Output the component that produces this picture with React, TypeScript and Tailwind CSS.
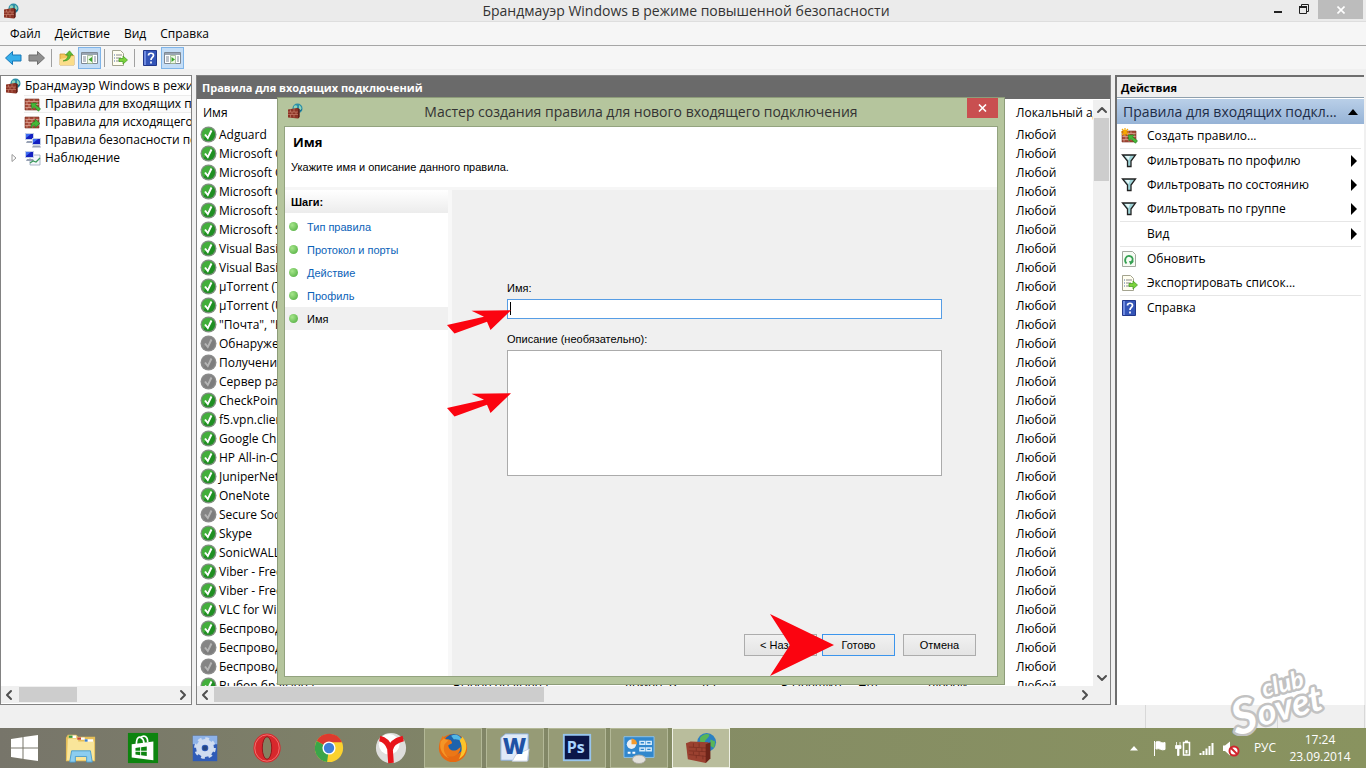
import type { ReactNode } from "react"
import { ChevronDown, ChevronLeft, ChevronRight, ChevronUp } from "lucide-react"

const ui = "font-['Open_Sans','Noto_Sans',sans-serif]"

interface Rule {
    name: string
    on: boolean
}

const rules: Rule[] = [
    { name: "Adguard", on: true },
    { name: "Microsoft O", on: true },
    { name: "Microsoft O", on: true },
    { name: "Microsoft O", on: true },
    { name: "Microsoft S", on: true },
    { name: "Microsoft S", on: true },
    { name: "Visual Basic", on: true },
    { name: "Visual Basic", on: true },
    { name: "µTorrent (T", on: true },
    { name: "µTorrent (U", on: true },
    { name: "\"Почта\", \"К", on: true },
    { name: "Обнаруже", on: false },
    { name: "Получение", on: false },
    { name: "Сервер раз", on: false },
    { name: "CheckPoint", on: true },
    { name: "f5.vpn.clien", on: true },
    { name: "Google Chr", on: true },
    { name: "HP All-in-O", on: true },
    { name: "JuniperNet", on: true },
    { name: "OneNote", on: true },
    { name: "Secure Soc", on: false },
    { name: "Skype", on: true },
    { name: "SonicWALL", on: true },
    { name: "Viber - Free", on: true },
    { name: "Viber - Free", on: true },
    { name: "VLC for Win", on: true },
    { name: "Беспровод", on: true },
    { name: "Беспровод", on: false },
    { name: "Беспровод", on: false },
    { name: "Выбор браузера", on: true },
]

const lastRow = ["Выбор браузера", "Домен, Ч", "Да", "Разрешить", "Нет", "Любой"]

const steps = ["Тип правила", "Протокол и порты", "Действие", "Профиль", "Имя"]

function FirewallIcon({ size = 16 }: { size?: number }) {
    return (
        <svg width={size} height={size} viewBox="0 0 16 16" className="shrink-0">
            <circle cx="10.5" cy="5.5" r="5" fill="#2c8fa8" />
            <path d="M7 3c2-2 4 0 3 1.500S7.500 6 6.500 7M12 2c2 1 3 3 2 5l-2-1z" fill="#8fd3b8" />
            <path d="M12 8.500c1.500-.5 2-1 2.500-2" stroke="#145c80" fill="none" />
            <path d="M1 6.500l9-1.500 2.500 1v8L11 15.500l-10-1z" fill="#8c3426" />
            <path d="M1 9h10M1 11.500h10M3.500 6.500V9M7 6v3M5 9v2.500M9 9v2.500M3.500 11.500v3M7 11.500v3" stroke="#d08a76" strokeWidth=".6" />
            <path d="M10 5l2.500 1v8L11 15.500V6.500z" fill="#5f2018" />
        </svg>
    )
}

function BrickIcon({ out = false, star = false }: { out?: boolean; star?: boolean }) {
    return (
        <svg width="17" height="16" viewBox="0 0 17 16" className="shrink-0">
            <path d="M1 3h14v11H1z" fill="#a64a38" />
            <path d="M1 5.500h14M1 8.500h14M1 11.500h14M5 3v2.500M10 3v2.500M3 5.500v3M8 5.500v3M13 5.500v3M5 8.500v3M10 8.500v3M3 11.500V14M8 11.500V14" stroke="#dba293" strokeWidth=".8" />
            <path d="M1 3h14v11H1z" fill="none" stroke="#7a2f22" strokeWidth=".6" />
            {out ? (
                <path d="M7 14c0-4 1-6 4-6.500V5l5 4.500-5 4v-2.500C9.500 11 8 12 7 14z" fill="#46b838" stroke="#1f7a1c" strokeWidth=".6" />
            ) : (
                <path d="M7 7h6.500l-2 1.800 5 4-2 2.500-4.500-4.500L8 13z" fill="#46b838" stroke="#1f7a1c" strokeWidth=".6" />
            )}
            {star && <path d="M4 0v8M0 4h8M1 1l6 6M7 1L1 7" stroke="#f6a800" strokeWidth="1.200" />}
        </svg>
    )
}

function ComputersIcon({ chart = false }: { chart?: boolean }) {
    return (
        <svg width="17" height="16" viewBox="0 0 17 16" className="shrink-0">
            {chart && <path d="M6 5h10v10H6z" fill="#f4f6fa" stroke="#97a5bb" strokeWidth=".8" />}
            <path d="M1 1h9v7H1z" fill="#c3cfe8" />
            <path d="M2 2h7v5H2z" fill="#1420c0" />
            <path d="M2 2h5L2 6z" fill="#3f6df0" />
            <path d="M3 9h6l1 2H2z" fill="#98a2b5" />
            {chart ? (
                <path d="M6 13l3-2 3 1 4-4" stroke="#3a9a5a" fill="none" strokeWidth="1.200" />
            ) : (
                <>
                    <path d="M8 6h9v7H8z" fill="#c3cfe8" />
                    <path d="M9 7h7v5H9z" fill="#1420c0" />
                    <path d="M9 7h5l-5 4z" fill="#3f6df0" />
                    <path d="M9 13.500h7l1 2H8z" fill="#98a2b5" />
                </>
            )}
        </svg>
    )
}

function StatusIcon({ on }: { on: boolean }) {
    return (
        <svg width="17" height="17" viewBox="0 0 17 17" className="shrink-0">
            <circle cx="8.500" cy="8.500" r="8" fill={on ? "#7f917f" : "#8c8c8c"} />
            <circle cx="8.500" cy="8.500" r="6.600" fill={on ? "#1f8f22" : "#7d7d7d"} />
            <path d="M8.500 1.900a6.600 6.600 0 0 0-5 11L13 3.800a6.600 6.600 0 0 0-4.500-1.900z" fill={on ? "#5cc44f" : "#8a8a8a"} opacity=".6" />
            <path d="M5 8.500l2.800 3.500L11.500 4.500" fill="none" stroke={on ? "#fff" : "#b5b5b5"} strokeWidth="2" />
        </svg>
    )
}

function HelpIcon() {
    return (
        <svg width="16" height="16" viewBox="0 0 16 16" className="shrink-0">
            <path d="M1.500.5h13v15h-13z" fill="#3455b8" stroke="#22378a" />
            <path d="M2 1h2v14H2z" fill="#6f8be0" />
            <path d="M6.500 5.500c0-3 5-3 5 0 0 2-2.500 2-2.500 4.500M9 11.500v2" stroke="#fff" strokeWidth="1.700" fill="none" />
        </svg>
    )
}

function ExportIcon() {
    return (
        <svg width="17" height="16" viewBox="0 0 17 16" className="shrink-0">
            <path d="M1.500.5h8l3 3v12h-11z" fill="#fffef0" stroke="#a3a38f" />
            <path d="M3 5h1M3 8h1M3 11h1" stroke="#4a6ab0" strokeWidth="1.200" />
            <path d="M5 5h6M5 8h5M5 11h4" stroke="#8a8a8a" />
            <path d="M8 8.500h4V6l4.500 4-4.500 4v-2.500H8z" fill="#7bd23c" stroke="#3f9a1c" strokeWidth=".7" />
        </svg>
    )
}

function RefreshIcon() {
    return (
        <svg width="16" height="16" viewBox="0 0 16 16" className="shrink-0">
            <path d="M1.500.5h10l3 3v12h-13z" fill="#f7fbf4" stroke="#a3a99f" />
            <path d="M5.500 12.500C2.500 9 5 4.500 8.500 5c3.500.3 4 4 2 6" stroke="#35a052" strokeWidth="1.800" fill="none" />
            <path d="M8 10l5 .5-3.500 3.500z" fill="#35a052" />
        </svg>
    )
}

function FilterIcon() {
    return (
        <svg width="16" height="16" viewBox="0 0 16 16" className="shrink-0">
            <path d="M1.500 2h13L10 8v5.500H6.500V8z" fill="#9fd4d8" stroke="#222" strokeWidth="1.300" />
            <path d="M4 3h5L7.500 7z" fill="#e6f8f8" />
        </svg>
    )
}

function ArrowIcon({ color, stroke, back = false }: { color: string; stroke: string; back?: boolean }) {
    return (
        <svg width="17" height="16" viewBox="0 0 17 16">
            <path
                d={back ? "M.5 8L7.500 1.500V5h8.500v6H7.500v3.500z" : "M16.500 8L9.500 1.500V5H1v6h8.500v3.500z"}
                fill={color}
                stroke={stroke}
            />
        </svg>
    )
}

function PaneIcon({ right = false }: { right?: boolean }) {
    return (
        <svg width="17" height="15" viewBox="0 0 17 15">
            <path d="M.5 2.500h16v11H.5z" fill="#fff" stroke="#7e8894" />
            <path d="M1 3h15v2H1z" fill="#9aa5b2" />
            <path d="M2 7h3M2 9h3M2 11h3M13 7h2M13 9h2M13 11h2" stroke="#7c8696" />
            <path d="M6.500 5.500h5v8h-5z" fill="#eef8e6" stroke="#8fa982" strokeWidth=".7" />
            <path d={right ? "M7.500 7l3.500 2.500L7.500 12z" : "M11 7L7.500 9.500 11 12z"} fill="#3aa62a" />
        </svg>
    )
}

function FolderUpIcon() {
    return (
        <svg width="16" height="16" viewBox="0 0 16 16">
            <path d="M1 4h5l1 1.500h8V15H1z" fill="#f5c65b" stroke="#c99a35" strokeWidth=".8" />
            <path d="M1 9l14-3v9H1z" fill="#fbdd8a" />
            <path d="M4 11c3-1 5-3 5-6H6.500L10.500.8 14 5h-2.500c0 4-3 6-7.500 6z" fill="#5fbd33" stroke="#3c8f1e" strokeWidth=".6" />
        </svg>
    )
}

function ToolButton({ label, active = false, children }: { label: string; active?: boolean; children: ReactNode }) {
    return (
        <button
            aria-label={label}
            className={`flex h-[22px] w-[23px] items-center justify-center border ${active ? "border-[#7fb4e8] bg-[#c4ddf6]" : "border-transparent"}`}
        >
            {children}
        </button>
    )
}

function HorizontalScroll({ thumb }: { thumb: string }) {
    return (
        <div className="mb-px flex h-[17px] shrink-0 items-center bg-[#f0f0f0] text-[#4f4f4f]">
            <ChevronLeft size={16} strokeWidth={3} className="shrink-0" />
            <div className={`h-[15px] bg-[#cdcdcd] ${thumb}`} />
            <ChevronRight size={16} strokeWidth={3} className="ml-auto shrink-0" />
        </div>
    )
}

function TreeRow({ icon, children, selected = false, arrow = false }: { icon: ReactNode; children: ReactNode; selected?: boolean; arrow?: boolean }) {
    return (
        <li className="flex h-[18px] items-center pl-[9px]">
            <span className="flex w-[14px] shrink-0 items-center">
                {arrow && (
                    <svg width="8" height="10" viewBox="0 0 8 10">
                        <path d="M2 1.500l4 3.500-4 3.500z" fill="#fff" stroke="#999" />
                    </svg>
                )}
            </span>
            <span className={`flex h-[18px] flex-1 items-center gap-1 whitespace-nowrap border-y ${selected ? "border-[#ececec] bg-[#fbfbfb]" : "border-transparent"}`}>
                {icon}
                {children}
            </span>
        </li>
    )
}

function ActionRow({ icon, children, menu = false, divider = false }: { icon?: ReactNode; children: ReactNode; menu?: boolean; divider?: boolean }) {
    return (
        <li className={divider ? "border-b border-[#e6e6e6]" : ""}>
            <button className="flex h-6 w-full items-center pl-px pr-1 text-left">
                <span className="flex w-[26px] shrink-0">{icon}</span>
                <span className="flex-1">{children}</span>
                {menu && (
                    <svg width="6" height="12" viewBox="0 0 6 12">
                        <path d="M0 0l6 6-6 6z" fill="#000" />
                    </svg>
                )}
            </button>
        </li>
    )
}

function RedArrow() {
    return (
        <svg width="64" height="24" viewBox="0 0 64 24">
            <path d="M0 15L37 6.700 24.500.8 64 .3 43.500 20 40 11.700 7.500 23.500z" fill="#fb0410" />
        </svg>
    )
}

function DialogButton({ children, primary = false }: { children: ReactNode; primary?: boolean }) {
    return (
        <button
            className={`h-[22px] w-[73px] whitespace-nowrap border bg-gradient-to-b from-[#f1f1f1] to-[#e4e4e4] ${primary ? "border-[#3c95ec]" : "border-[#acacac]"}`}
        >
            {children}
        </button>
    )
}

function WizardDialog() {
    return (
        <section className="absolute left-[277px] top-[97px] flex h-[588px] w-[728px] flex-col border border-[#8d9c79] bg-[#b5c59d] px-[6px] pb-[7px]">
            <header className="flex h-[28px] shrink-0 items-start">
                <span className="ml-[3px] mt-[5px]">
                    <FirewallIcon />
                </span>
                <h2 className="flex-1 whitespace-nowrap pl-3 pt-1 text-center text-[14px] leading-5 text-[#333]">
                    Мастер создания правила для нового входящего подключения
                </h2>
                <button aria-label="Закрыть" className="flex h-5 w-[31px] items-center justify-center bg-[#c94f50]">
                    <svg width="9" height="8" viewBox="0 0 9 8">
                        <path d="M1 .5l7 7M8 .5l-7 7" stroke="#fff" strokeWidth="1.600" />
                    </svg>
                </button>
            </header>

            <div className="flex flex-1 flex-col border border-[#93a37f] bg-white font-['Liberation_Sans',Arial,sans-serif] text-[11px] text-black">
                <div className="h-[60px] shrink-0 px-[6px] pt-[7px]">
                    <h3 className={`${ui} pl-[2px] text-[13px] font-bold leading-4`}>Имя</h3>
                    <p className="mt-[9px] leading-4">Укажите имя и описание данного правила.</p>
                </div>
                <div className="flex flex-1 border-t-[3px] border-[#f6f6f6]">
                    <nav className="w-[167px] shrink-0 border-r-4 border-[#f8f8f8] bg-white">
                        <h4 className="mb-[2px] flex h-[23px] items-center bg-gradient-to-b from-white to-[#ececec] pl-[6px] font-bold">Шаги:</h4>
                        <ul>
                            {steps.map((step, i) => (
                                <li key={step} className={`flex h-[23px] items-center gap-[9px] pl-1 ${i === 4 ? "bg-[#f0f0f0]" : ""}`}>
                                    <span className="size-[9px] rounded-full bg-radial-[at_35%_35%] from-[#a6e68b] to-[#4aa83a]" />
                                    {i === 4 ? step : <a href="#step" className="text-[#0b62b8]">{step}</a>}
                                </li>
                            ))}
                        </ul>
                    </nav>

                    <form className="flex flex-1 flex-col bg-[#f0f0f0] pb-[20px] pl-[55px] pr-[21px] pt-[90px]" onSubmit={(e) => e.preventDefault()}>
                        <label htmlFor="rule-name" className="leading-4">Имя:</label>
                        <div className="relative mr-[34px] mt-[3px]">
                            <input id="rule-name" type="text" className="block h-5 w-full border border-[#569de5] bg-white px-1 outline-none" />
                            <span className="absolute left-[3px] top-[3px] h-[13px] w-px bg-black" />
                            <span className="absolute -left-[60px] top-[11px]">
                                <RedArrow />
                            </span>
                        </div>
                        <label htmlFor="rule-note" className="mt-3 leading-4">Описание (необязательно):</label>
                        <div className="relative mr-[34px] mt-[3px]">
                            <textarea id="rule-note" className="block h-[126px] w-full resize-none border border-[#ababab] bg-white p-1 outline-none" />
                            <span className="absolute -left-[60px] top-[43px]">
                                <RedArrow />
                            </span>
                        </div>
                        <div className="relative mt-auto flex justify-end">
                            <DialogButton>&lt; Назад</DialogButton>
                            <span className="ml-[5px] mr-2 flex">
                                <DialogButton primary>Готово</DialogButton>
                            </span>
                            <DialogButton>Отмена</DialogButton>
                            <svg width="64" height="62" viewBox="0 0 64 62" className="absolute -top-5 right-[142px]">
                                <path d="M0 0l64 31L0 62l20-31z" fill="#fb0410" />
                            </svg>
                        </div>
                    </form>
                </div>
            </div>
        </section>
    )
}

function RulesTable() {
    return (
        <table className="w-full table-fixed border-collapse text-left">
            <colgroup>
                <col className="w-[250px]" />
                <col className="w-[171px]" />
                <col className="w-[77px]" />
                <col className="w-[80px]" />
                <col className="w-[77px]" />
                <col className="w-[69px]" />
                <col className="w-[89px]" />
                <col />
            </colgroup>
            <thead>
                <tr className="h-[25px]">
                    <th className="p-0 pl-[6px] font-normal">Имя</th>
                    <td colSpan={6} />
                    <th className="overflow-hidden whitespace-nowrap p-0 pl-[6px] font-normal">Локальный ад</th>
                </tr>
            </thead>
            <tbody>
                {rules.map((rule, i) => (
                    <tr key={i} className="h-[19px] whitespace-nowrap">
                        <td className="p-0 pl-[3px]">
                            <div className="flex h-[19px] items-center gap-[2px]">
                                <StatusIcon on={rule.on} />
                                {rule.name}
                            </div>
                        </td>
                        {i === rules.length - 1
                            ? lastRow.map((cell) => <td key={cell} className="p-0 pl-[6px]">{cell}</td>)
                            : <td colSpan={6} />}
                        <td className="p-0 pl-[6px]">Любой</td>
                    </tr>
                ))}
            </tbody>
        </table>
    )
}

function TaskItem({ label, open = false, active = false, children }: { label: string; open?: boolean; active?: boolean; children: ReactNode }) {
    const frame = active
        ? "border-[#eef0e4] bg-[#b9bd9c]"
        : open
            ? "border-[#b3b897] bg-[#969b76]"
            : "border-transparent"
    return (
        <button aria-label={label} className={`mx-[2px] flex h-10 w-[58px] items-center justify-center border ${frame}`}>
            <svg width="32" height="32" viewBox="0 0 34 34">{children}</svg>
        </button>
    )
}

function Taskbar() {
    return (
        <footer className="flex h-10 shrink-0 items-center bg-gradient-to-r from-[#77756a] via-[#858c65] to-[#89935f] text-white">
            <button aria-label="Пуск" className="flex w-[50px] justify-center">
                <svg width="28" height="26" viewBox="0 0 28 26">
                    <path d="M0 4l11.500-1.700V12.500H0zM12.500 2.100L27 0v12.500H12.500zM0 13.500h11.500v10.200L0 22zM12.500 13.500H27V26l-14.500-2.100z" fill="#fff" />
                </svg>
            </button>
            <TaskItem label="Проводник">
                <path d="M1 6l2-3h9l2 2h18v26H1z" fill="#e6bf58" />
                <path d="M3 7h11v3h17v20H2z" fill="#f9e59a" />
                <path d="M4 5h8M13 7h8M21 9h9" stroke="#fff" strokeWidth="2.500" />
                <path d="M4 5h4" stroke="#3c9a3c" strokeWidth="2.500" />
                <path d="M13 7h4" stroke="#c94a2e" strokeWidth="2.500" />
                <path d="M21 9h3" stroke="#3a7dc9" strokeWidth="2.500" />
                <path d="M7 20h20l2 12h-6v-6H11v6H5z" fill="#8ccdf0" stroke="#4c9ccc" />
            </TaskItem>
            <TaskItem label="Магазин">
                <path d="M1 1h32v32H1z" fill="#0d840f" />
                <path d="M5 13l23-3v20L5 27z" fill="#fff" />
                <path d="M10 13c0-8 3-8 5-7s3 2 3 6M14 6c4-3 8-2 8 5" stroke="#fff" strokeWidth="1.800" fill="none" />
                <path d="M9 17l5-.7V20H9zM15 16.200l6-.7V20h-6zM9 21h5v3.700L9 24zM15 21h6v4.500l-6-.7z" fill="#0d840f" />
            </TaskItem>
            <TaskItem label="Параметры">
                <path d="M4 4h26v27H4z" fill="#2f5cb8" />
                <path d="M4 4h26v9H4z" fill="#8db2e8" />
                <circle cx="17" cy="17" r="6.500" fill="none" stroke="#cfdcf0" strokeWidth="6" />
                <circle cx="17" cy="17" r="10" fill="none" stroke="#cfdcf0" strokeWidth="3" strokeDasharray="4 3.850" />
                <circle cx="17" cy="17" r="2.500" fill="#26457f" />
            </TaskItem>
            <TaskItem label="Opera">
                <ellipse cx="17" cy="17" rx="14.500" ry="15.500" fill="#d8282c" />
                <ellipse cx="17" cy="17" rx="13" ry="14" fill="none" stroke="#f07572" />
                <ellipse cx="17" cy="17" rx="5" ry="12" fill="#858061" stroke="#951217" />
            </TaskItem>
            <TaskItem label="Chrome">
                <circle cx="17" cy="17" r="15" fill="#fbd22f" />
                <path d="M17 17L4 9.500A15 15 0 0 1 30.800 11H17z" fill="#dd3a2e" />
                <path d="M17 17L4 9.500A15 15 0 0 0 15 32z" fill="#3aa54a" />
                <circle cx="17" cy="17" r="7" fill="#fff" />
                <circle cx="17" cy="17" r="5.500" fill="#3f7fd8" />
            </TaskItem>
            <TaskItem label="Яндекс">
                <circle cx="17" cy="17" r="16" fill="#dededc" />
                <circle cx="15" cy="13" r="11" fill="#fff" />
                <path d="M5 7c5 1 9 5 11 11M30 7c-8 2-13 6-14 12l1 14" stroke="#e8151b" strokeWidth="6" fill="none" />
            </TaskItem>
            <TaskItem label="Firefox" open>
                <circle cx="17" cy="17" r="15" fill="#e66a12" />
                <circle cx="18" cy="13" r="11" fill="#1d63ac" />
                <path d="M15 4c5-3 11 0 11 5-3 0-5-2-8-1z" fill="#52b7e4" />
                <path d="M27 5c7 8 5 19-4 24 3-5 5-13 1-20z" fill="#fcc42a" />
                <path d="M3 10l3-6 3 4c5-1 7 2 7 4l-4 2c0 4 4 7 9 5l4-3c0 7-6 11-12 10C6 25 2 18 3 10z" fill="#ec7716" />
                <path d="M4 10l3-3 5 2-4 4c-2 6 0 11 5 15C6 25 2 18 4 10z" fill="#f49527" />
            </TaskItem>
            <TaskItem label="Word" open>
                <path d="M2 6l5-4h24v28H2z" fill="#dfe9f8" stroke="#8fb0de" />
                <path d="M18 24l14-6-2 13H14z" fill="#fff" stroke="#c3cedf" />
                <text x="4" y="23" fontSize="24" fontWeight="800" fill="#1f52a5" fontFamily="Open Sans, sans-serif">W</text>
            </TaskItem>
            <TaskItem label="Photoshop" open>
                <path d="M2 2h30v29H2z" fill="#98c5ee" />
                <path d="M4 4h26v25H4z" fill="#0b1648" />
                <text x="6" y="22" fontSize="17" fontWeight="700" fill="#a8d4ff" fontFamily="Open Sans, sans-serif">Ps</text>
            </TaskItem>
            <TaskItem label="Панель управления" open>
                <path d="M1 5h32v22H1z" fill="#3187cd" stroke="#8ec3ec" />
                <circle cx="9" cy="13" r="5" fill="#e8eef4" />
                <path d="M9 13V7a6 6 0 0 1 6 6z" fill="#f49a2e" />
                <path d="M18 10h5v3h-5zM25 10h5v3h-5zM18 17h5v3h-5zM25 17h5v3h-5z" fill="none" stroke="#d5ebfb" strokeWidth="1.500" />
                <path d="M5 22h3M10 22h3" stroke="#fff" strokeWidth="2" />
                <ellipse cx="17" cy="29" rx="7" ry="4.500" fill="#e2e0db" stroke="#a9a79f" />
            </TaskItem>
            <TaskItem label="Брандмауэр" open active>
                <circle cx="23" cy="11" r="10" fill="#2a80c2" />
                <path d="M16 6c3-4 8-5 10-3-1 4-4 4-5 8l-5 1zM27 8l5 2-1 7-4-2z" fill="#58b657" />
                <path d="M1 12l5-2 19 1 1 18-4 4-19-4z" fill="#9b4130" />
                <path d="M4 16l19 1M4 20l19 1M4 24l19 2M9 12v4M15 12v4M12 17v3M18 17v4M9 21v3M15 21v4M12 25v3M19 25v4" stroke="#7a2d20" strokeWidth=".8" />
                <path d="M22 13l5-2v17l-5 5z" fill="#6d2419" />
            </TaskItem>

            <div className="ml-auto flex items-center">
                <svg width="118" height="18" viewBox="0 0 118 18" className="mr-[9px]">
                    <path d="M9 7l4 4.500H5z" fill="#fff" />
                    <path d="M29.500 2v15M31 3c4-2 5 2 9 .5v7c-4 1.500-5-2-9-.5z" stroke="#fff" fill="#fff" />
                    <path d="M58.500 3.500h6V16h-6z" fill="none" stroke="#fff" strokeWidth="1.500" />
                    <path d="M60 1.500h3v2h-3zM60.500 11h2v3.500h-2z" fill="#fff" />
                    <path d="M51.500 3v3.500M55 3v3.500M50.500 6.500h5.500v3h-2v7h-1.500v-7h-2z" stroke="#fff" fill="#fff" strokeWidth=".8" />
                    <path d="M75.500 14v2M78.500 12v4M81.500 9.500V16M84.500 7v9M87.500 4v12" stroke="#fff" strokeWidth="2" />
                    <path d="M98 6.500h2l5-4v14l-5-4.500h-2z" fill="#fff" />
                    <circle cx="109" cy="12" r="4.500" fill="#fff" stroke="#d0242b" strokeWidth="2" />
                    <path d="M106 9l6 6" stroke="#d0242b" strokeWidth="2" />
                </svg>
                <span className="w-[26px] text-center">РУС</span>
                <div className="w-[88px] whitespace-nowrap pr-1 text-center leading-[17px]">
                    <div>17:24</div>
                    <div>23.09.2014</div>
                </div>
            </div>
        </footer>
    )
}

export default function App() {
    return (
        <div className={`${ui} relative flex h-screen flex-col overflow-hidden bg-[#f0f0f0] text-[12px] leading-4 text-black`}>
            <header className="flex h-[22px] shrink-0 items-start border-b border-[#dedede] bg-[#ebebeb]">
                <span className="ml-[3px] mt-[3px] w-[104px]">
                    <FirewallIcon />
                </span>
                <h1 className="flex-1 pt-px text-center text-[14px] leading-5 text-[#333]">Брандмауэр Windows в режиме повышенной безопасности</h1>
                <div className="flex items-start">
                    <button aria-label="Свернуть" className="flex h-[18px] w-[26px] items-end justify-center pb-[5px]">
                        <span className="h-[2px] w-2 bg-[#222]" />
                    </button>
                    <button aria-label="Восстановить" className="flex h-[18px] w-[26px] items-center justify-center">
                        <svg width="10" height="10" viewBox="0 0 10 10">
                            <path d="M2.500 2.500V.5h7v7h-2M.5 2.500h7v7h-7z" fill="none" stroke="#222" />
                            <path d="M0 3h8" stroke="#222" strokeWidth="2" />
                        </svg>
                    </button>
                    <button aria-label="Закрыть" className="ml-px mr-[3px] flex h-[19px] w-[45px] items-center justify-center bg-[#bcbcbc]">
                        <svg width="8" height="8" viewBox="0 0 8 8">
                            <path d="M.5.5l7 7M7.500.5l-7 7" stroke="#fff" strokeWidth="1.600" />
                        </svg>
                    </button>
                </div>
            </header>

            <nav className="flex h-[24px] shrink-0 items-center gap-[14px] border-b border-[#a6a6a6] bg-[#f6f6f6] pl-[10px]">
                <button>Файл</button>
                <button>Действие</button>
                <button>Вид</button>
                <button>Справка</button>
            </nav>

            <div className="flex h-[23px] shrink-0 items-center bg-[#f6f6f6] pl-[2px]">
                <ToolButton label="Назад"><ArrowIcon color="#36aeea" stroke="#1878b8" back /></ToolButton>
                <ToolButton label="Вперед"><ArrowIcon color="#8f8f8f" stroke="#6f6f6f" /></ToolButton>
                <span className="mx-[3px] h-[18px] w-px bg-[#a0a0a0]" />
                <ToolButton label="Вверх"><FolderUpIcon /></ToolButton>
                <ToolButton label="Дерево консоли" active><PaneIcon /></ToolButton>
                <span className="mx-[3px] h-[18px] w-px bg-[#a0a0a0]" />
                <ToolButton label="Экспорт"><ExportIcon /></ToolButton>
                <span className="mx-[3px] h-[18px] w-px bg-[#a0a0a0]" />
                <ToolButton label="Справка"><HelpIcon /></ToolButton>
                <ToolButton label="Панель действий" active><PaneIcon right /></ToolButton>
            </div>

            <main className="mt-[6px] flex min-h-0 flex-1 gap-1 pr-[2px]">
                <aside className="flex w-[192px] shrink-0 flex-col border border-[#828282] bg-white">
                    <div className="flex h-[19px] items-center gap-1 overflow-hidden whitespace-nowrap pl-1">
                        <FirewallIcon />
                        <span>Брандмауэр Windows в режим</span>
                    </div>
                    <ul className="flex-1 overflow-hidden">
                        <TreeRow icon={<BrickIcon />} selected>Правила для входящих под</TreeRow>
                        <TreeRow icon={<BrickIcon out />}>Правила для исходящего п</TreeRow>
                        <TreeRow icon={<ComputersIcon />}>Правила безопасности под</TreeRow>
                        <TreeRow icon={<ComputersIcon chart />} arrow>Наблюдение</TreeRow>
                    </ul>
                    <HorizontalScroll thumb="ml-[2px] w-[58px]" />
                </aside>

                <section className="flex min-w-0 flex-1 flex-col border border-[#828282] bg-white">
                    <h2 className="mb-px flex h-[23px] shrink-0 items-center bg-[#6a6a6a] pl-[5px] text-[11px] font-bold text-white">
                        Правила для входящих подключений
                    </h2>
                    <div className="flex min-h-0 flex-1">
                        <div className="min-w-0 flex-1 overflow-hidden">
                            <RulesTable />
                        </div>
                        <div className="flex w-[17px] shrink-0 flex-col items-center bg-[#f0f0f0] text-[#4f4f4f]">
                            <ChevronUp size={16} strokeWidth={3} className="mt-[2px] shrink-0" />
                            <div className="h-[63px] w-[15px] bg-[#cdcdcd]" />
                            <ChevronDown size={16} strokeWidth={3} className="mt-auto shrink-0" />
                        </div>
                    </div>
                    <div className="bg-[#f0f0f0] pr-[17px]">
                        <HorizontalScroll thumb="ml-px w-[330px]" />
                    </div>
                </section>

                <aside className="w-[249px] shrink-0 border-l-2 border-t-2 border-[#6e6e6e] bg-white">
                    <h2 className="flex h-[21px] items-center border-b border-[#8fa0ae] bg-[#f0f0f0] pl-1 pt-px text-[11px] font-bold">Действия</h2>
                    <div className="mt-px flex h-[25px] items-center justify-between bg-gradient-to-b from-[#b9cfe8] to-[#96b3d6] pl-[6px] pr-[6px] text-[#1d2c47]">
                        <h3 className="whitespace-nowrap text-[14px] leading-5">Правила для входящих подкл...</h3>
                        <svg width="10" height="6" viewBox="0 0 10 6" className="shrink-0">
                            <path d="M5 0l5 6H0z" fill="#000" />
                        </svg>
                    </div>
                    <ul className="px-[3px]">
                        <ActionRow icon={<BrickIcon star />} divider>Создать правило...</ActionRow>
                        <ActionRow icon={<FilterIcon />} menu>Фильтровать по профилю</ActionRow>
                        <ActionRow icon={<FilterIcon />} menu>Фильтровать по состоянию</ActionRow>
                        <ActionRow icon={<FilterIcon />} menu divider>Фильтровать по группе</ActionRow>
                        <ActionRow menu divider>Вид</ActionRow>
                        <ActionRow icon={<RefreshIcon />}>Обновить</ActionRow>
                        <ActionRow icon={<ExportIcon />} divider>Экспортировать список...</ActionRow>
                        <ActionRow icon={<HelpIcon />}>Справка</ActionRow>
                    </ul>
                </aside>
            </main>

            <div className="flex h-[23px] shrink-0 justify-end">
                <span className="w-[132px] border-l border-[#d8d8d8]" />
                <span className="w-[87px] border-l border-[#d8d8d8]" />
                <span className="w-[2px] border-l border-[#d8d8d8]" />
            </div>

            <Taskbar />
            <WizardDialog />

            <svg width="110" height="76" viewBox="0 0 110 76" className="absolute bottom-8 right-[30px]">
                <g transform="rotate(-15 55 38)" fill="#fff" stroke="#c2c2c2" strokeWidth="5" strokeLinejoin="round" paintOrder="stroke" fontFamily="Lato, sans-serif" fontStyle="italic" fontWeight="700">
                    <text x="2" y="63" fontSize="48">S</text>
                    <text x="28" y="60" fontSize="36">ovet</text>
                    <text x="39" y="33" fontSize="24">club</text>
                </g>
            </svg>
        </div>
    )
}
